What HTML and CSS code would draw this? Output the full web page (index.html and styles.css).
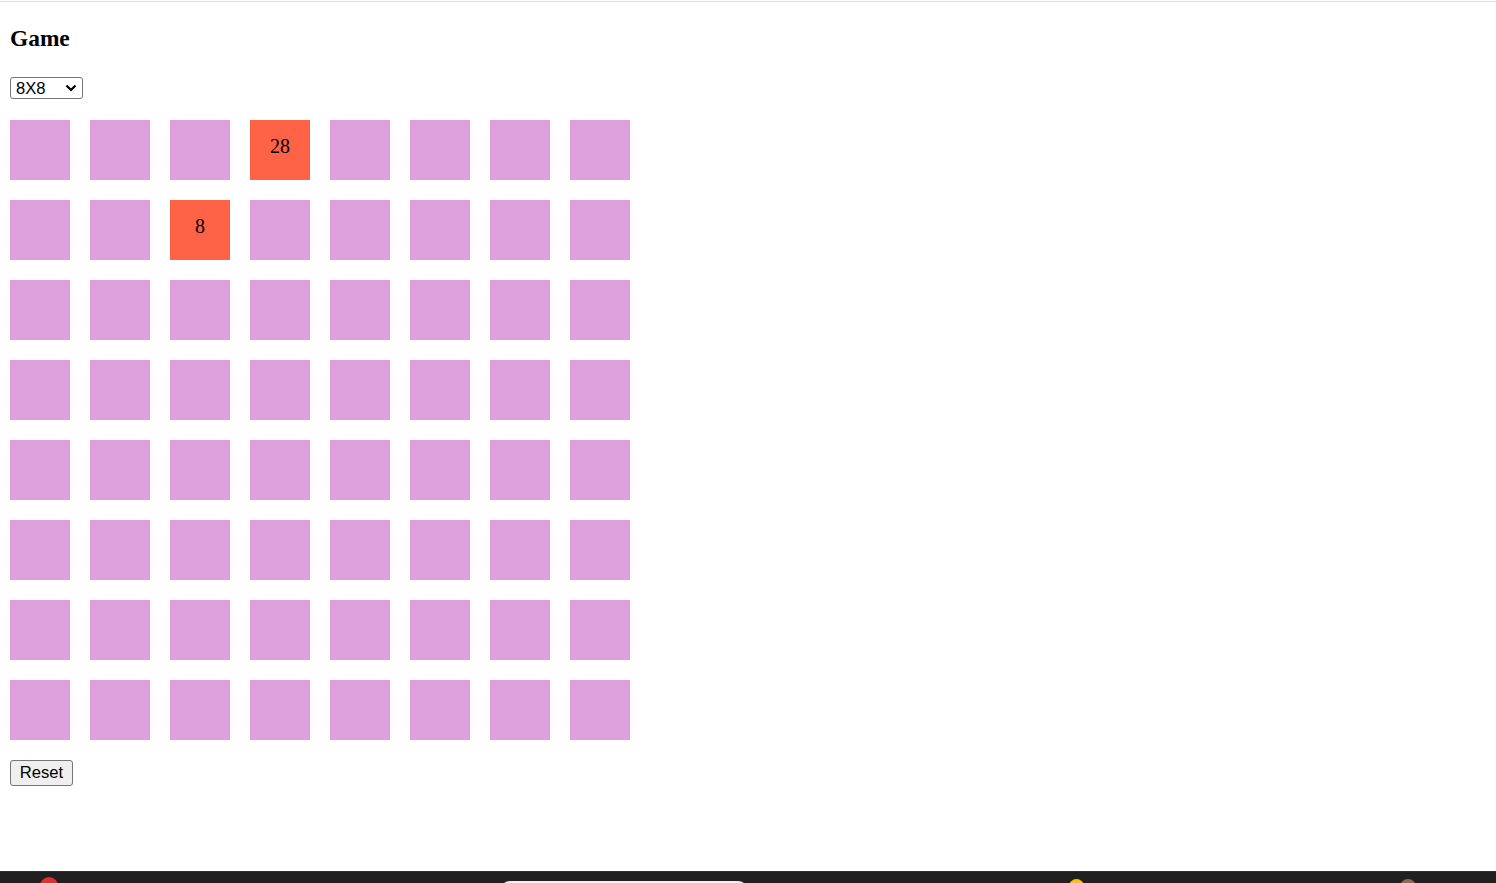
FILE: index.html
```html
<!DOCTYPE html>
<html lang="en">
<head>
  <meta charset="UTF-8" />
  <title>Game</title>
  <link rel="stylesheet" href="styles.css">
</head>
<body>
  <div class="top-line"></div>
  <div class="page">
    <h3>Game</h3>
    <select id="size">
      <option>4X4</option>
      <option>6X6</option>
      <option selected>8X8</option>
    </select>
    <div id="board" class="board">
      <div class="cell"></div><div class="cell"></div><div class="cell"></div><div class="cell on">28</div>
      <div class="cell"></div><div class="cell"></div><div class="cell"></div><div class="cell"></div>
      <div class="cell"></div><div class="cell"></div><div class="cell on">8</div><div class="cell"></div>
      <div class="cell"></div><div class="cell"></div><div class="cell"></div><div class="cell"></div>
      <div class="cell"></div><div class="cell"></div><div class="cell"></div><div class="cell"></div>
      <div class="cell"></div><div class="cell"></div><div class="cell"></div><div class="cell"></div>
      <div class="cell"></div><div class="cell"></div><div class="cell"></div><div class="cell"></div>
      <div class="cell"></div><div class="cell"></div><div class="cell"></div><div class="cell"></div>
      <div class="cell"></div><div class="cell"></div><div class="cell"></div><div class="cell"></div>
      <div class="cell"></div><div class="cell"></div><div class="cell"></div><div class="cell"></div>
      <div class="cell"></div><div class="cell"></div><div class="cell"></div><div class="cell"></div>
      <div class="cell"></div><div class="cell"></div><div class="cell"></div><div class="cell"></div>
      <div class="cell"></div><div class="cell"></div><div class="cell"></div><div class="cell"></div>
      <div class="cell"></div><div class="cell"></div><div class="cell"></div><div class="cell"></div>
      <div class="cell"></div><div class="cell"></div><div class="cell"></div><div class="cell"></div>
      <div class="cell"></div><div class="cell"></div><div class="cell"></div><div class="cell"></div>
    </div>
    <button class="reset">Reset</button>
  </div>

  <div class="taskbar">
    <span class="dot red"></span>
    <span class="search"></span>
    <span class="dot yellow"></span>
    <span class="dot brown"></span>
  </div>
</body>
</html>
```

FILE: styles.css
```css
body {
  margin: 0;
  font-family: "Liberation Serif", "Times New Roman", serif;
  background-color: #fff;
  color: #000;
}
.top-line {
  margin-top: 1px;
  height: 1px;
  background-color: #dedede;
}
.page {
  padding: 0 10px;
}
h3 {
  font-size: 23.4px;
  line-height: 27px;
  margin: 23px 0 25px;
}
select {
  display: block;
  width: 73px;
  height: 22px;
  font-family: "Liberation Sans", Arial, sans-serif;
  font-size: 16.6px;
  border: 1px solid #767676;
  border-radius: 3px;
  color: #000;
  padding: 0 0 0 5px;
  appearance: none;
  -webkit-appearance: none;
  background: #fff url("data:image/svg+xml,%3Csvg xmlns='http://www.w3.org/2000/svg' width='12' height='8' viewBox='0 0 12 8'%3E%3Cpath d='M1.5 1.5 6 6l4.5-4.5' fill='none' stroke='%23000' stroke-width='2.2'/%3E%3C/svg%3E") no-repeat right 5px center;
}
.board {
  display: grid;
  grid-template-columns: repeat(8, 60px);
  gap: 20px;
  margin-top: 21px;
}
.cell {
  width: 60px;
  height: 60px;
  box-sizing: border-box;
  padding-top: 15px;
  background-color: #dda0dd;
  text-align: center;
  font-size: 20px;
  line-height: 23px;
}
.cell.on {
  background-color: #ff6347;
}
.reset {
  display: block;
  margin-top: 20px;
  width: 63px;
  height: 26px;
  padding: 0;
  font-family: "Liberation Sans", Arial, sans-serif;
  font-size: 16.6px;
  color: #000;
  background-color: #efefef;
  border: 1px solid #767676;
  border-radius: 3px;
}
.taskbar {
  position: fixed;
  left: 0;
  right: 0;
  bottom: 0;
  height: 11px;
  background-color: #202020;
  border-top: 1px solid #2e2e2e;
  overflow: hidden;
  display: flex;
  align-items: flex-start;
}
.dot {
  flex: none;
  width: 18px;
  height: 18px;
  border-radius: 50%;
}
.red {
  margin: 5px 0 0 40px;
  background-color: #e0312a;
}
.search {
  flex: none;
  width: 248px;
  height: 20px;
  margin: 9px 0 0 442px;
  border-radius: 10px;
  background-color: #f2f2f2;
}
.yellow {
  width: 15px;
  height: 15px;
  margin: 7px 0 0 321px;
  background-color: #f7c600;
}
.brown {
  width: 16px;
  height: 16px;
  margin: 7px 0 0 316px;
  background-color: #8a6a58;
}
```
